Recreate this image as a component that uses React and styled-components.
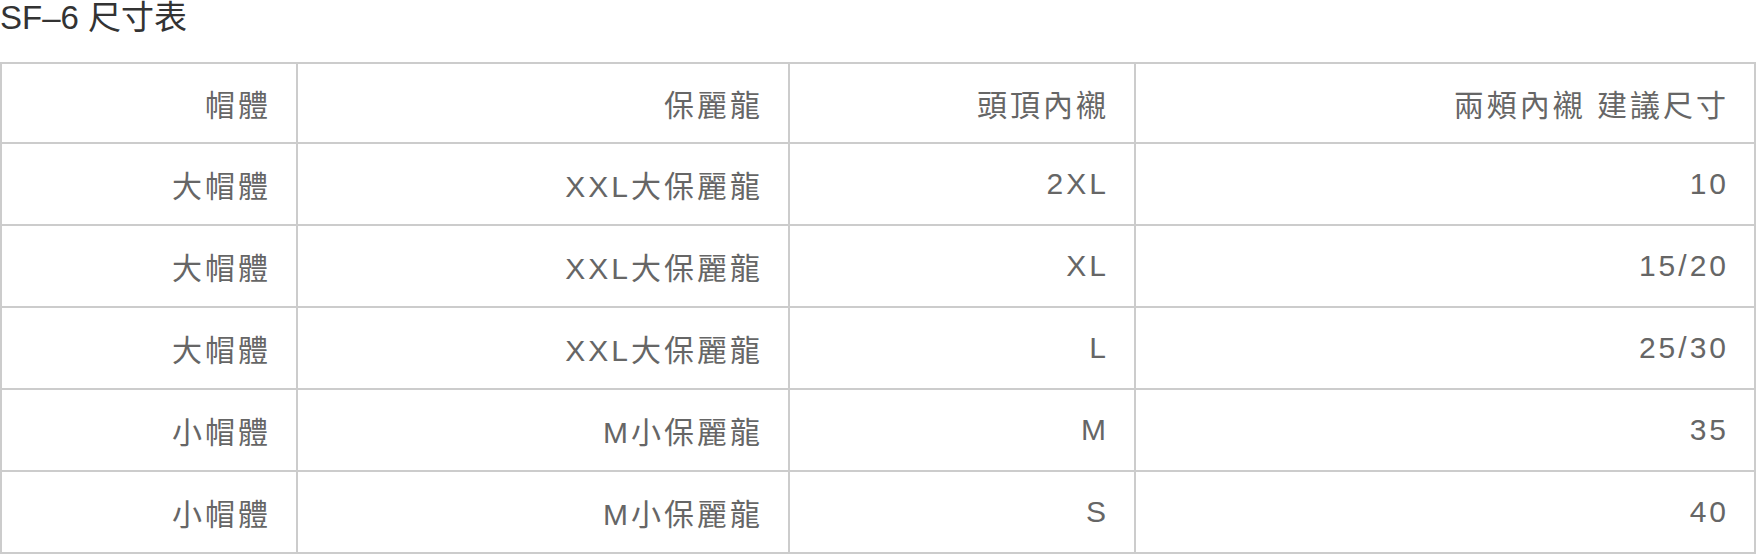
import React from 'react';
import styled, { createGlobalStyle } from 'styled-components';

const GlobalStyle = createGlobalStyle`
  body {
    margin: 0;
    background: #fff;
    font-family: 'Liberation Sans', 'Noto Sans CJK TC', sans-serif;
  }
`;

const StyledPage = styled.div`
  width: 1758px;
`;

const Title = styled.div`
  font-size: 33px;
  line-height: 36px;
  color: #333;
  height: 62px;
`;

const SizeTable = styled.table`
  width: 1756px;
  table-layout: fixed;
  border-collapse: collapse;
  font-size: 30px;
  letter-spacing: 3px;
  color: #666;

  th,
  td {
    border: 2px solid #ccc;
    padding: 0 25px 0 0;
    text-align: right;
    vertical-align: middle;
    font-weight: normal;
    white-space: nowrap;
  }

  th {
    height: 78px;
  }

  td {
    height: 80px;
  }
`;

const columns = [
  { label: '帽體', width: 296 },
  { label: '保麗龍', width: 492 },
  { label: '頭頂內襯', width: 346 },
  { label: '兩頰內襯 建議尺寸', width: 620 },
];

const rows = [
  ['大帽體', 'XXL大保麗龍', '2XL', '10'],
  ['大帽體', 'XXL大保麗龍', 'XL', '15/20'],
  ['大帽體', 'XXL大保麗龍', 'L', '25/30'],
  ['小帽體', 'M小保麗龍', 'M', '35'],
  ['小帽體', 'M小保麗龍', 'S', '40'],
];

const App = () => (
  <StyledPage>
    <GlobalStyle />
    <Title>SF–6 尺寸表</Title>
    <SizeTable>
      <colgroup>
        {columns.map((col) => (
          <col key={col.label} style={{ width: col.width }} />
        ))}
      </colgroup>
      <thead>
        <tr>
          {columns.map((col) => (
            <th key={col.label}>{col.label}</th>
          ))}
        </tr>
      </thead>
      <tbody>
        {rows.map((row, i) => (
          <tr key={i}>
            {row.map((cell, j) => (
              <td key={j}>{cell}</td>
            ))}
          </tr>
        ))}
      </tbody>
    </SizeTable>
  </StyledPage>
);

export default App;
